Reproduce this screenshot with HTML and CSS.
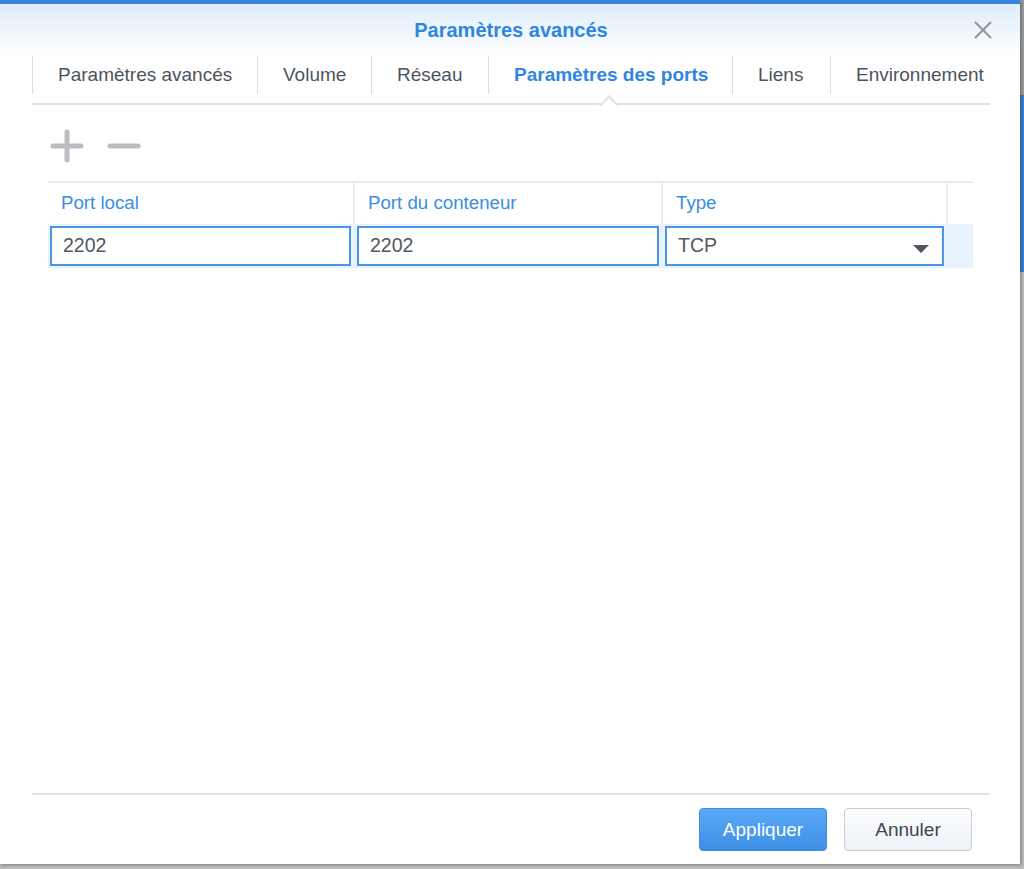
FILE: index.html
```html
<!DOCTYPE html>
<html lang="fr">
<head>
<meta charset="utf-8">
<title>Paramètres avancés</title>
<link rel="stylesheet" href="styles.css">
</head>
<body>
<div class="backdrop">
  <div class="dialog">
    <div class="header">
      <div class="title">Paramètres avancés</div>
      <button class="close" aria-label="Fermer">
        <svg width="20" height="20" viewBox="0 0 20 20"><path d="M2 2 L18 18 M18 2 L2 18" stroke="#8f949a" stroke-width="2" fill="none"/></svg>
      </button>
    </div>
    <div class="tabs">
      <div class="tab">Paramètres avancés</div>
      <div class="tab">Volume</div>
      <div class="tab">Réseau</div>
      <div class="tab active">Paramètres des ports</div>
      <div class="tab">Liens</div>
      <div class="tab">Environnement</div>
    </div>
    <div class="content">
      <div class="toolbar">
        <span class="tool">
          <svg width="34" height="34" viewBox="0 0 34 34"><path d="M17 3 V31 M3 17 H31" stroke="#babdc1" stroke-width="5" stroke-linecap="round"/></svg>
        </span>
        <span class="tool">
          <svg width="34" height="34" viewBox="0 0 34 34"><path d="M3 17 H31" stroke="#babdc1" stroke-width="5" stroke-linecap="round"/></svg>
        </span>
      </div>
      <div class="grid">
        <div class="row head">
          <div class="cell c1">Port local</div>
          <div class="cell c2">Port du conteneur</div>
          <div class="cell c3">Type</div>
          <div class="cell c4"></div>
        </div>
        <div class="row data">
          <div class="cell c1"><div class="field">2202</div></div>
          <div class="cell c2"><div class="field">2202</div></div>
          <div class="cell c3"><div class="field select"><span>TCP</span><span class="caret"></span></div></div>
          <div class="cell c4"></div>
        </div>
      </div>
    </div>
    <div class="footer">
      <button class="btn primary">Appliquer</button>
      <button class="btn">Annuler</button>
    </div>
  </div>
</div>
</body>
</html>
```
FILE: styles.css
```css
* { box-sizing: border-box; }
html, body { margin: 0; padding: 0; }
body {
  width: 1024px;
  height: 869px;
  overflow: hidden;
  font-family: "Liberation Sans", Arial, sans-serif;
  background: linear-gradient(to bottom, #9a9a9a 0, #9a9a9a 95px, #3b7bcf 95px, #3b7bcf 272px, #b9b9b9 272px, #b9b9b9 100%);
}
.backdrop {
  width: 1024px;
  height: 869px;
  background: linear-gradient(to bottom, transparent 0, transparent 862px, #bdbdbd 862px);
}
.dialog {
  width: 1020px;
  height: 864px;
  background: #fff;
  border-top: 4px solid #3a86dc;
  display: flex;
  flex-direction: column;
  box-shadow: 1px 1px 3px rgba(0,0,0,0.35);
}
.header {
  height: 52px;
  flex: none;
  background: linear-gradient(to bottom, #deedfa 0, #ffffff 100%);
  display: flex;
  align-items: center;
  justify-content: center;
  position: relative;
}
.title {
  font-size: 20px;
  font-weight: bold;
  color: #2f86e0;
  margin-left: 2px;
}
.close {
  position: absolute;
  right: 27px;
  top: 16px;
  border: 0;
  background: none;
  padding: 0;
  width: 20px;
  height: 20px;
}
.close svg { display: block; }
.tabs {
  margin: 0 30px 0 32px;
  height: 49px;
  flex: none;
  display: flex;
  border-bottom: 2px solid #e2e2e2;
  position: relative;
}
.tab {
  height: 38px;
  display: flex;
  align-items: center;
  font-size: 19px;
  color: #4b545e;
  border-left: 1px solid #d7e0ea;
  padding: 0 0 0 25px;
  white-space: nowrap;
}
.tab:nth-child(1) { width: 225px; }
.tab:nth-child(2) { width: 114px; }
.tab:nth-child(3) { width: 117px; }
.tab:nth-child(4) { width: 244px; position: relative; }
.tab:nth-child(5) { width: 98px; }
.tab:nth-child(6) { flex: 1; }
.tab.active {
  color: #2f86e0;
  font-weight: bold;
}
.tab.active::after {
  content: "";
  position: absolute;
  left: 113px;
  top: 42px;
  width: 12px;
  height: 12px;
  background: #fff;
  border-left: 2px solid #e2e2e2;
  border-top: 2px solid #e2e2e2;
  transform: rotate(45deg);
}
.content {
  flex: 1;
  padding: 24px 47px 0 48px;
}
.toolbar {
  display: flex;
  gap: 23px;
  padding-left: 2px;
  height: 52px;
}
.tool svg { display: block; }
.grid {
  border-top: 2px solid #e3ebf3;
  width: 925px;
}
.row { display: flex; }
.cell { flex: none; }
.c1 { width: 307px; }
.c2 { width: 308px; }
.c3 { width: 285px; }
.c4 { width: 25px; }
.head .cell {
  height: 41px;
  font-size: 18.7px;
  color: #3a8ee2;
  padding: 9px 0 0 13px;
  border-right: 2px solid #e6edf5;
  white-space: nowrap;
}
.head .c4 { border-right: 0; }
.data {
  background: #e8f3fd;
  height: 44px;
  padding-top: 2px;
}
.data .cell { padding: 0 4px 0 2px; }
.data .c4 { padding: 0; }
.field {
  height: 40px;
  border: 2px solid #4a95e6;
  background: #fff;
  font-size: 19.5px;
  color: #505861;
  padding: 6px 0 0 11px;
}
.select {
  display: flex;
  justify-content: space-between;
  padding-right: 13px;
}
.caret {
  width: 0;
  height: 0;
  border-left: 8px solid transparent;
  border-right: 8px solid transparent;
  border-top: 8px solid #4f5660;
  margin-top: 11px;
}
.footer {
  margin: 0 30px 0 32px;
  height: 71px;
  flex: none;
  border-top: 2px solid #e2e2e2;
  display: flex;
  justify-content: flex-end;
  align-items: flex-start;
  gap: 17px;
  padding: 13px 18px 0 0;
}
.btn {
  width: 128px;
  height: 43px;
  border-radius: 4px;
  font-family: "Liberation Sans", Arial, sans-serif;
  font-size: 19px;
  border: 1px solid #c6ceda;
  background: linear-gradient(to bottom, #fbfcfe, #eef2f7);
  color: #3f4650;
}
.btn.primary {
  border: 1px solid #3f8ae0;
  background: linear-gradient(to bottom, #5aa9f7, #3e8fe6);
  color: #fff;
}
```
